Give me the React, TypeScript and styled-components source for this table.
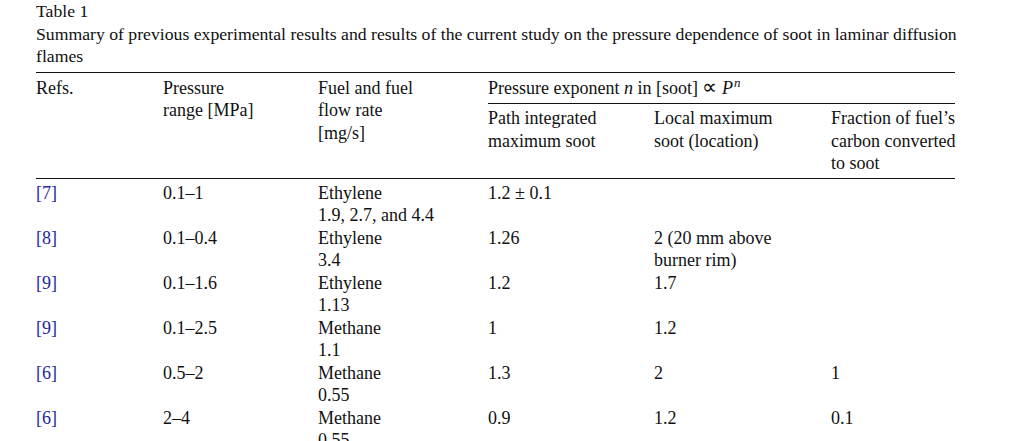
import styled, { createGlobalStyle } from 'styled-components';

const GlobalStyle = createGlobalStyle`
  body {
    margin: 0;
    background: #fff;
    color: #111;
    font-family: 'Liberation Serif', 'Times New Roman', serif;
  }
`;

interface Row {
  ref: string;
  range: string;
  fuel: string;
  rate: string;
  path: string;
  local: string[];
  fraction: string;
}

const rows: Row[] = [
  { ref: '7', range: '0.1–1', fuel: 'Ethylene', rate: '1.9, 2.7, and 4.4', path: '1.2 ± 0.1', local: [], fraction: '' },
  { ref: '8', range: '0.1–0.4', fuel: 'Ethylene', rate: '3.4', path: '1.26', local: ['2 (20 mm above', 'burner rim)'], fraction: '' },
  { ref: '9', range: '0.1–1.6', fuel: 'Ethylene', rate: '1.13', path: '1.2', local: ['1.7'], fraction: '' },
  { ref: '9', range: '0.1–2.5', fuel: 'Methane', rate: '1.1', path: '1', local: ['1.2'], fraction: '' },
  { ref: '6', range: '0.5–2', fuel: 'Methane', rate: '0.55', path: '1.3', local: ['2'], fraction: '1' },
  { ref: '6', range: '2–4', fuel: 'Methane', rate: '0.55', path: '0.9', local: ['1.2'], fraction: '0.1' },
];

export default function App() {
  return (
    <>
      <GlobalStyle />
      <Page>
        <Caption>
          Table 1
          <br />
          Summary of previous experimental results and results of the current study on the
          pressure dependence of soot in laminar diffusion
          <br />
          flames
        </Caption>
        <Table>
          <colgroup>
            <col style={{ width: 127 }} />
            <col style={{ width: 155 }} />
            <col style={{ width: 170 }} />
            <col style={{ width: 166 }} />
            <col style={{ width: 177 }} />
            <col style={{ width: 124 }} />
          </colgroup>
          <thead>
            <tr>
              <Head rowSpan={2}>Refs.</Head>
              <Head rowSpan={2}>
                Pressure
                <br />
                range [MPa]
              </Head>
              <Head rowSpan={2}>
                Fuel and fuel
                <br />
                flow rate
                <br />
                [mg/s]
              </Head>
              <GroupHead colSpan={3}>
                Pressure exponent <i>n</i> in [soot] <Prop>∝</Prop> <i>P</i>
                <Sup>n</Sup>
              </GroupHead>
            </tr>
            <tr>
              <SubHead>
                Path integrated
                <br />
                maximum soot
              </SubHead>
              <SubHead>
                Local maximum
                <br />
                soot (location)
              </SubHead>
              <SubHead>
                Fraction of fuel’s
                <br />
                carbon converted
                <br />
                to soot
              </SubHead>
            </tr>
          </thead>
          <tbody>
            {rows.map((r, i) => (
              <tr key={i}>
                <Cell $first={i === 0}>
                  <RefLink>[{r.ref}]</RefLink>
                </Cell>
                <Cell $first={i === 0}>{r.range}</Cell>
                <Cell $first={i === 0}>
                  {r.fuel}
                  <br />
                  {r.rate}
                </Cell>
                <Cell $first={i === 0}>{r.path}</Cell>
                <Cell $first={i === 0}>
                  {r.local.map((l, j) => (
                    <span key={j}>
                      {j > 0 && <br />}
                      {l}
                    </span>
                  ))}
                </Cell>
                <Cell $first={i === 0}>{r.fraction}</Cell>
              </tr>
            ))}
          </tbody>
        </Table>
      </Page>
    </>
  );
}

const Page = styled.div`
  padding-left: 36px;
  width: 919px;
  font-size: 18px;
  line-height: 22.5px;
`;

const Caption = styled.div`
  margin-bottom: 4px;
  white-space: nowrap;
  font-size: 17.7px;
`;

const Table = styled.table`
  width: 919px;
  table-layout: fixed;
  border-collapse: collapse;
  border-top: 1.3px solid #111;
  font-size: 18px;
  line-height: 22.5px;
`;

const Head = styled.th`
  text-align: left;
  vertical-align: top;
  font-weight: normal;
  padding: 4px 0 0 0;
  border-bottom: 1.3px solid #111;
  white-space: nowrap;
`;

const GroupHead = styled.th`
  text-align: left;
  vertical-align: top;
  font-weight: normal;
  padding: 4px 0 4px 0;
  border-bottom: 1.3px solid #111;
  white-space: nowrap;
`;

const SubHead = styled.th`
  text-align: left;
  vertical-align: top;
  font-weight: normal;
  padding: 3px 0 3px 0;
  border-bottom: 1.3px solid #111;
  white-space: nowrap;
`;

const Prop = styled.span`
  font-family: 'DejaVu Sans', sans-serif;
  font-size: 21px;
  line-height: 0;
  font-weight: 300;
`;

const Sup = styled.i`
  position: relative;
  top: -7px;
  font-size: 13px;
  margin-left: 1px;
  line-height: 0;
`;

const Cell = styled.td<{ $first?: boolean }>`
  text-align: left;
  vertical-align: top;
  padding: ${(p) => (p.$first ? '3px' : '0')} 0 0 0;
  white-space: nowrap;
`;

const RefLink = styled.span`
  color: #25259c;
`;
